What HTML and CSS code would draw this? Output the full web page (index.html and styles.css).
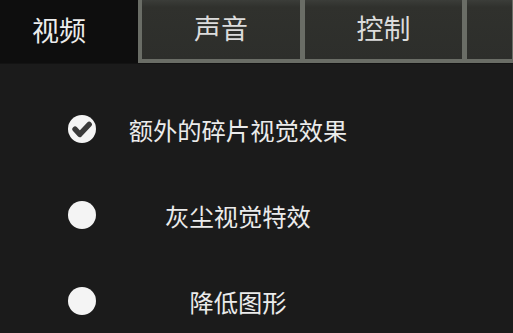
FILE: index.html
```html
<!DOCTYPE html>
<html lang="zh">
<head>
<meta charset="utf-8">
<link rel="stylesheet" href="styles.css">
</head>
<body>
<div class="tabs">
  <div class="tab active">视频</div>
  <div class="tab">声音</div>
  <div class="tab">控制</div>
  <div class="tab last"></div>
</div>
<div class="options">
  <div class="row">
    <span class="radio">
      <svg viewBox="0 0 28 28" width="28" height="28"><circle cx="14" cy="14" r="14" fill="#f4f4f4"/><polyline points="7,14.2 11.8,19.4 21.2,9.4" fill="none" stroke="#3a3a3a" stroke-width="5.4" stroke-linejoin="round" stroke-linecap="round"/></svg>
    </span>
    <span class="label">额外的碎片视觉效果</span>
  </div>
  <div class="row">
    <span class="radio"><svg viewBox="0 0 28 28" width="28" height="28"><circle cx="14" cy="14" r="14" fill="#f4f4f4"/></svg></span>
    <span class="label">灰尘视觉特效</span>
  </div>
  <div class="row">
    <span class="radio"><svg viewBox="0 0 28 28" width="28" height="28"><circle cx="14" cy="14" r="14" fill="#f4f4f4"/></svg></span>
    <span class="label">降低图形</span>
  </div>
</div>
</body>
</html>
```

FILE: styles.css
```css
html, body {
  margin: 0;
  padding: 0;
  background: #1b1b1b;
  overflow: hidden;
  font-family: "Noto Sans CJK SC", "Noto Sans", sans-serif;
}
.tabs {
  display: flex;
  height: 63px;
  border-bottom: 1px solid #131313;
}
.tab {
  box-sizing: border-box;
  width: 162px;
  flex: none;
  display: flex;
  align-items: center;
  justify-content: center;
  padding-bottom: 4px;
  color: #dcdcdc;
  font-size: 27px;
  background: linear-gradient(#3b3d39 0, #30312d 12%, #2d2e2b 100%);
  border-left: 5px solid #6a6d66;
  border-bottom: 4px solid #6a6d66;
}
.tab:nth-child(2) {
  border-left-width: 4px;
}
.tab.active {
  width: 138px;
  background: #0e0e0e;
  border: none;
  padding: 0 20px 4px 0;
  color: #ececec;
}
.tab.last {
  width: 51px;
  border-right: 1px solid #6a6d66;
}
.options {
  padding-top: 22px;
}
.row {
  display: flex;
  align-items: center;
  height: 86px;
  padding-left: 68px;
}
.radio {
  width: 28px;
  height: 28px;
  display: block;
}
.radio svg {
  display: block;
}
.label {
  width: 284px;
  text-align: center;
  font-size: 24.3px;
  color: #ebebeb;
}
```
